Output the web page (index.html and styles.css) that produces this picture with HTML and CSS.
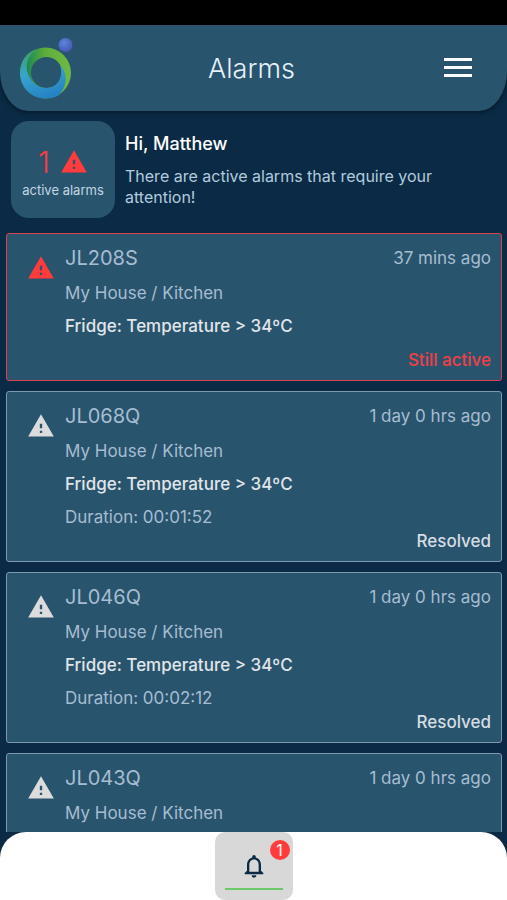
FILE: index.html
```
<!DOCTYPE html>
<html lang="en">
<head>
    <meta charset="UTF-8">
    <meta name="viewport" content="width=device-width, initial-scale=1.0">
    <title>Alarms</title>
    <link rel="stylesheet" href="styles.css">
</head>
<body>
    <svg class="sprite" aria-hidden="true">
        <symbol id="warning" viewBox="0 0 24 24">
            <path fill="currentColor" d="M1 21h22L12 2 1 21zm12-3h-2v-2h2v2zm0-4h-2v-4h2v4z"/>
        </symbol>
    </svg>

    <div class="status-bar"></div>

    <header class="header">
        <a href="#" class="logo" aria-label="Home">
            <svg width="54" height="62" viewBox="0 0 54 62">
                <defs>
                    <linearGradient id="green" x1="0" y1="0" x2="1" y2="0">
                        <stop offset="0.15" stop-color="#1f8a50"/>
                        <stop offset="0.5" stop-color="#5fae3c"/>
                        <stop offset="1" stop-color="#6fb944"/>
                    </linearGradient>
                    <linearGradient id="blue" x1="0.2" y1="0" x2="0.5" y2="1">
                        <stop offset="0" stop-color="#3f9f5c"/>
                        <stop offset="0.45" stop-color="#3aa3d0"/>
                        <stop offset="1" stop-color="#2583c4"/>
                    </linearGradient>
                    <radialGradient id="ball" cx="0.4" cy="0.35" r="0.7">
                        <stop offset="0" stop-color="#5c86d8"/>
                        <stop offset="1" stop-color="#4556b4"/>
                    </radialGradient>
                </defs>
                <path fill="url(#green)" fill-rule="evenodd" d="M25.500 10.500a25.500 25.500 0 1 1 0 51a25.500 25.500 0 1 1 0-51zM26.500 20a15.500 15.500 0 1 0 0 31a15.500 15.500 0 1 0 0-31z"/>
                <path fill="url(#blue)" d="M17 12C6 15 0 25 0 36C0 50 11 61.500 25.500 61.500C31 61.500 36 60 39 58C46 51 49 37 40 28.500C44 39 38 51 26.500 51C19 51 13 47 10 41C4 32 6 19 17 12z"/>
                <circle cx="45.500" cy="8" r="7" fill="url(#ball)"/>
            </svg>
        </a>
        <h1>Alarms</h1>
        <button class="menu" aria-label="Menu">
            <svg width="28" height="20" viewBox="0 0 28 20">
                <path fill="#fff" d="M0 0h28v3H0zM0 8h28v3H0zM0 16h28v3H0z"/>
            </svg>
        </button>
    </header>

    <section class="summary">
        <div class="counter">
            <div class="counter-top">
                <span class="count">1</span>
                <svg class="warning"><use href="#warning"/></svg>
            </div>
            <span class="counter-label">active alarms</span>
        </div>
        <div class="greeting">
            <h2>Hi, Matthew</h2>
            <p>There are active alarms that require your attention!</p>
        </div>
    </section>

    <main class="alarms">
        <article class="card active">
            <svg class="warning"><use href="#warning"/></svg>
            <div class="card-body">
                <div class="card-head">
                    <h3>JL208S</h3>
                    <time>37 mins ago</time>
                </div>
                <p>My House / Kitchen</p>
                <p class="message">Fridge: Temperature &gt; 34ºC</p>
                <div class="state">Still active</div>
            </div>
        </article>
        <article class="card">
            <svg class="warning"><use href="#warning"/></svg>
            <div class="card-body">
                <div class="card-head">
                    <h3>JL068Q</h3>
                    <time>1 day 0 hrs ago</time>
                </div>
                <p>My House / Kitchen</p>
                <p class="message">Fridge: Temperature &gt; 34ºC</p>
                <p>Duration: 00:01:52</p>
                <div class="state">Resolved</div>
            </div>
        </article>
        <article class="card">
            <svg class="warning"><use href="#warning"/></svg>
            <div class="card-body">
                <div class="card-head">
                    <h3>JL046Q</h3>
                    <time>1 day 0 hrs ago</time>
                </div>
                <p>My House / Kitchen</p>
                <p class="message">Fridge: Temperature &gt; 34ºC</p>
                <p>Duration: 00:02:12</p>
                <div class="state">Resolved</div>
            </div>
        </article>
        <article class="card">
            <svg class="warning"><use href="#warning"/></svg>
            <div class="card-body">
                <div class="card-head">
                    <h3>JL043Q</h3>
                    <time>1 day 0 hrs ago</time>
                </div>
                <p>My House / Kitchen</p>
            </div>
        </article>
    </main>

    <nav class="tabs">
        <button class="tab" aria-label="Alarms">
            <svg width="28" height="28" viewBox="0 0 24 24">
                <path fill="#0a2a45" d="M12 22c1.100 0 2-.9 2-2h-4c0 1.100.9 2 2 2zm6-6v-5c0-3.070-1.630-5.640-4.500-6.320V4c0-.83-.67-1.500-1.500-1.500s-1.500.67-1.500 1.500v.68C7.640 5.360 6 7.920 6 11v5l-2 2v1h16v-1l-2-2zm-2 1H8v-6c0-2.480 1.510-4.500 4-4.500s4 2.020 4 4.500v6z"/>
            </svg>
            <span class="badge">1</span>
        </button>
    </nav>
</body>
</html>
```
FILE: styles.css
```
* {
    box-sizing: border-box;
}

body {
    display: flex;
    flex-direction: column;
    height: 100vh;
    margin: 0;
    font-family: Inter, "Open Sans", sans-serif;
    font-size: 17px;
    color: #a6bdd2;
    background-color: #0a2a45;
}

h1, h2, h3, p {
    margin: 0;
    font-weight: 400;
}

button {
    padding: 0;
    border: none;
    background: none;
    cursor: pointer;
}

.sprite {
    display: none;
}

.status-bar {
    flex: none;
    height: 25px;
    background-color: #000;
}

.header {
    flex: none;
    display: grid;
    grid-template-columns: 1fr auto 1fr;
    align-items: center;
    height: 86px;
    padding: 0 24px 0 20px;
    background-color: #29546d;
    border-radius: 0 0 28px 28px / 0 0 40px 40px;
    box-shadow: 0 1px 5px rgba(0, 0, 0, 0.5);
}

.header h1 {
    font-size: 27px;
    font-weight: 300;
    color: #e6f1fa;
}

.logo {
    display: flex;
}

.menu {
    display: flex;
    justify-self: end;
    padding: 0 11px;
}

.summary {
    flex: none;
    display: flex;
    gap: 10px;
    padding: 10px 11px 15px;
}

.counter {
    flex: none;
    display: flex;
    flex-direction: column;
    align-items: center;
    justify-content: center;
    width: 104px;
    height: 97px;
    padding-top: 4px;
    border-radius: 18px;
    background-color: #29546d;
}

.counter-top {
    display: flex;
    align-items: center;
    gap: 10px;
    color: #ff3b3b;
}

.count {
    font-size: 30px;
    font-weight: 300;
    line-height: 36px;
}

.counter-label {
    font-size: 13px;
    line-height: 20px;
    color: #c3d6e6;
}

.warning {
    flex: none;
    width: 28px;
    height: 28px;
}

.greeting {
    padding-top: 12px;
}

.greeting h2 {
    margin-bottom: 11px;
    font-size: 18px;
    font-weight: 500;
    line-height: 22px;
    color: #fff;
}

.greeting p {
    max-width: 330px;
    font-size: 16px;
    line-height: 21px;
    color: #b4cbdf;
}

.alarms {
    flex: 1;
    min-height: 0;
    display: flex;
    flex-direction: column;
    gap: 10px;
    padding: 0 5px 0 6px;
    overflow-y: auto;
    scrollbar-width: none;
}

.card {
    flex: none;
    display: flex;
    align-items: flex-start;
    gap: 10px;
    padding: 6px 10px 13px 20px;
    border: 1px solid #7d9aae;
    border-radius: 3px;
    background-color: #29546d;
}

.card .warning {
    margin-top: 14px;
    color: #dcdcdc;
}

.card-body {
    flex: 1;
}

.card-head {
    display: flex;
    justify-content: space-between;
    line-height: 37px;
}

.card h3 {
    font-size: 20px;
}

.card p {
    line-height: 33px;
}

.card .message {
    font-weight: 500;
    color: #e1e6ea;
}

.state {
    font-weight: 500;
    line-height: 14px;
    text-align: right;
    color: #d5dde4;
}

.card.active {
    border-color: #d8434c;
}

.card.active .warning {
    color: #ff3b3b;
}

.card.active .state {
    margin-top: 10px;
    color: #f04046;
}

.tabs {
    flex: none;
    display: flex;
    justify-content: center;
    height: 68px;
    background-color: #fff;
    border-radius: 26px 26px 0 0;
}

.tab {
    position: relative;
    display: flex;
    flex-direction: column;
    align-items: center;
    justify-content: center;
    width: 78px;
    border-radius: 10px;
    background-color: #d8d8d8;
}

.tab::after {
    content: "";
    position: absolute;
    bottom: 10px;
    left: 10px;
    right: 10px;
    height: 2px;
    background-color: #6cc96a;
}

.badge {
    position: absolute;
    top: 8px;
    right: 3px;
    width: 20px;
    height: 20px;
    border-radius: 50%;
    font-family: Inter, "Open Sans", sans-serif;
    font-size: 16px;
    line-height: 20px;
    text-align: center;
    color: #fff;
    background-color: #ff3b3b;
}
```
